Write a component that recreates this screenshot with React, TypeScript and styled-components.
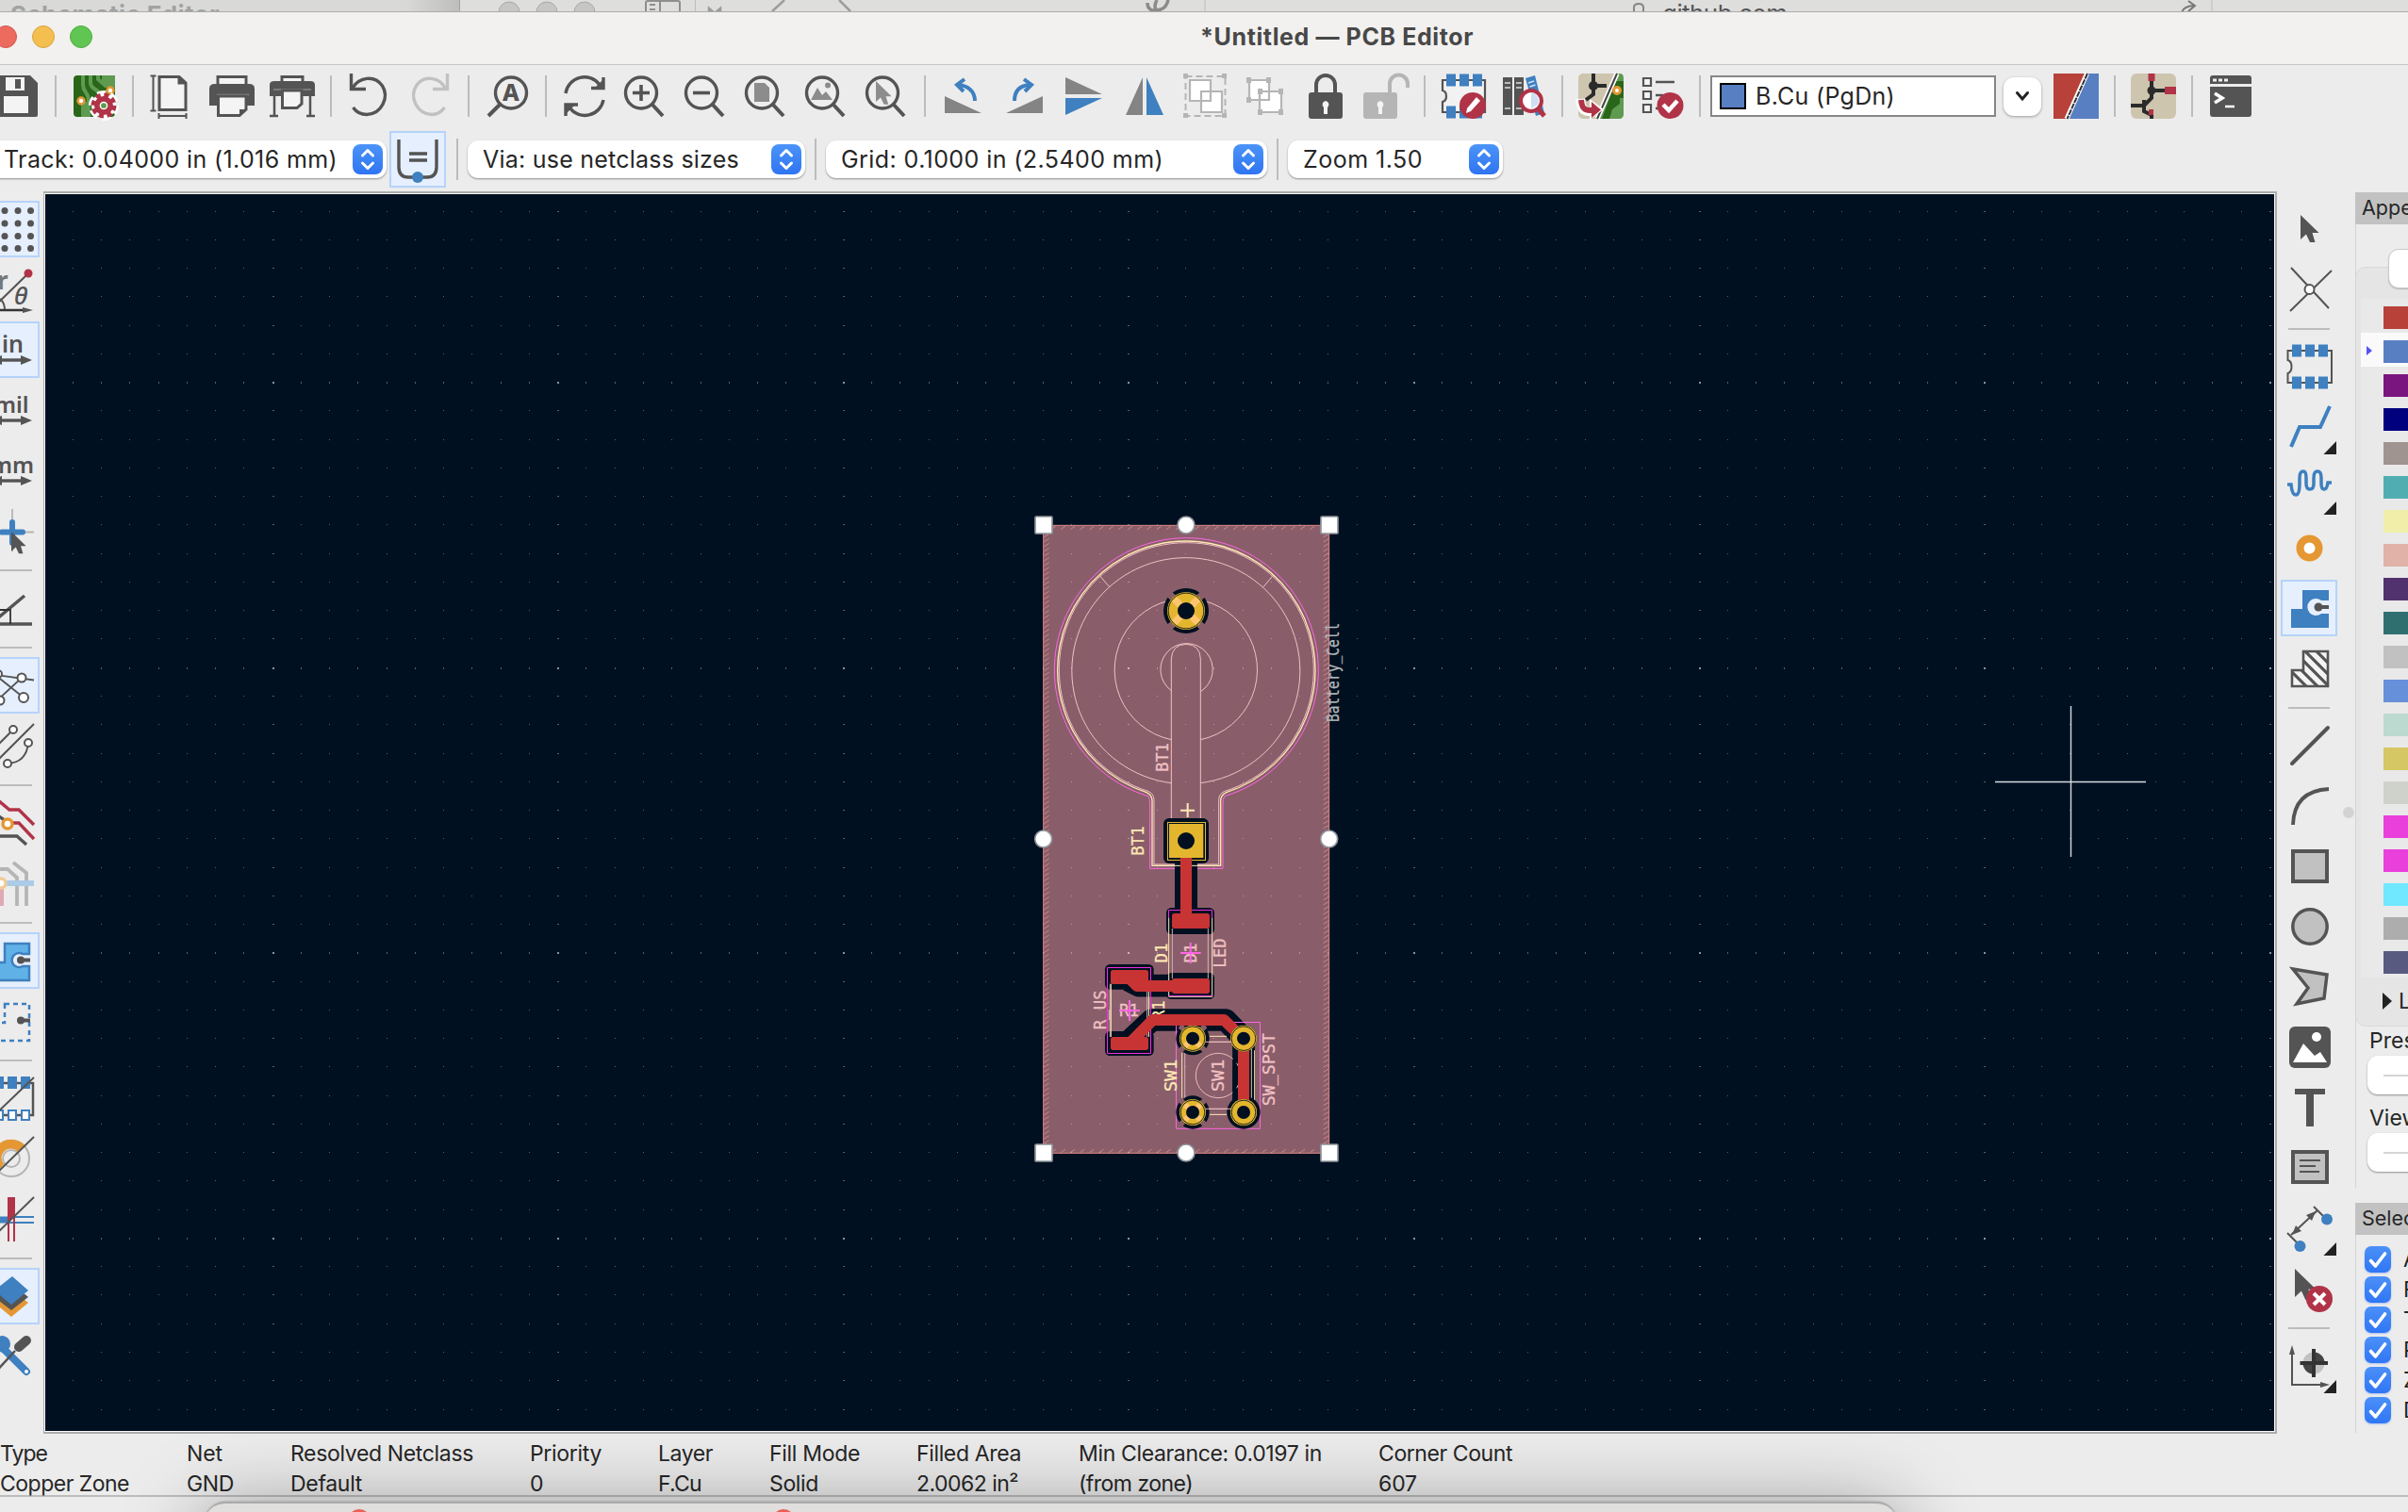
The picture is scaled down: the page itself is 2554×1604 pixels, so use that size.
import React, { useLayoutEffect, useRef, useState } from 'react';
import styled, { createGlobalStyle, css } from 'styled-components';

const K = '#545454';
const B = '#3e80c0';
const R = '#b13347';
const O = '#e59733';
const G = '#b5b5b5';
const VOID = '#001021';
const GOLD = '#e3b62e';
const RED = '#c83434';
const FAB = '#f2c1c4';
const SILK = '#ffe9b5';
const MAG = '#ff66e4';
const PEACH = '#ffc570';
const ZONE = '#895e6a';

const GlobalStyle = createGlobalStyle`
  html, body { margin: 0; padding: 0; overflow: hidden; }
  * { box-sizing: border-box; }
  body { font-family: Inter, "Liberation Sans", sans-serif; color: #262626; }
`;

const Screen = styled.div`
  width: 2554px;
  height: 1604px;
  overflow: hidden;
  display: flex;
  flex-direction: column;
  background: #ececec;
`;

/* ---------- text fitted to a nominal width ---------- */
const Glyphs = styled.span<{ $size: number; $weight: number; $color: string }>`
  display: inline-block;
  white-space: nowrap;
  font-size: ${(p) => p.$size}px;
  font-weight: ${(p) => p.$weight};
  color: ${(p) => p.$color};
  line-height: 32px;
`;

type LabelProps = { text: string; width?: number; size?: number; weight?: number; color?: string };
function Label({ text, width, size = 25, weight = 400, color = '#262626' }: LabelProps) {
  const ref = useRef<HTMLSpanElement>(null);
  const [spacing, setSpacing] = useState(0);
  useLayoutEffect(() => {
    if (ref.current && width) {
      const natural = ref.current.getBoundingClientRect().width;
      setSpacing((width - natural) / text.length);
    }
  }, []);
  return (
    <Glyphs ref={ref} $size={size} $weight={weight} $color={color} style={{ letterSpacing: spacing }}>
      {text}
    </Glyphs>
  );
}

/* ---------- windows behind ---------- */
const BackStrip = styled.div`
  flex: none;
  height: 12px;
  display: flex;
  overflow: hidden;
  background: #dededc;
`;
const BackLeft = styled.div`
  width: 488px;
  height: 12px;
  padding-left: 11px;
  background: linear-gradient(90deg, #d9d9d8 0, #d9d9d8 430px, #bdbdbc 488px);
  border-right: 1px solid #a5a5a5;
  overflow: hidden;
`;
const BackDrawing = styled.svg`
  display: block;
  width: 2066px;
  height: 12px;
`;

/* ---------- title ---------- */
const TitleBar = styled.div`
  flex: none;
  height: 57px;
  display: flex;
  align-items: center;
  padding-bottom: 4px;
  background: #f2f1ef;
  border-top: 1px solid #acacac;
  border-bottom: 1px solid #c6c6c6;
`;
const Lights = styled.div`
  display: flex;
  gap: 16px;
  margin-left: -6px;
  width: 1279px;
`;
const Light = styled.i<{ $c: string; $b: string }>`
  width: 24px;
  height: 24px;
  border-radius: 50%;
  background: ${(p) => p.$c};
  border: 1px solid ${(p) => p.$b};
`;

/* ---------- tool bars ---------- */
const TopTools = styled.div`
  flex: none;
  height: 66px;
  padding-left: 0;
  margin-left: -14px;
  display: flex;
  align-items: center;
`;
const HCell = styled.div`
  flex: none;
  width: 64px;
  height: 60px;
  display: flex;
  align-items: center;
  justify-content: center;
`;
const HSep = styled.div`
  flex: none;
  width: 2px;
  height: 44px;
  margin: 0 8px;
  background: #bcbcbc;
`;
const IconSvg = styled.svg`
  display: block;
  flex: none;
  width: 48px;
  height: 48px;
  overflow: visible;
`;
const LayerBox = styled.div`
  flex: none;
  width: 303px;
  height: 44px;
  margin: 0 8px 0 2px;
  padding-left: 8px;
  display: flex;
  align-items: center;
  gap: 10px;
  background: #fff;
  border: 2px solid #868686;
`;
const LayerSwatch = styled.i`
  width: 28px;
  height: 28px;
  background: #587fc2;
  border: 2px solid #000;
`;
const DropButton = styled.div`
  flex: none;
  width: 40px;
  height: 41px;
  margin-right: 5px;
  display: flex;
  align-items: center;
  justify-content: center;
  background: #fff;
  border-radius: 11px;
  box-shadow: 0 1px 3px rgba(0, 0, 0, 0.35);
`;

const SecondTools = styled.div`
  flex: none;
  height: 68px;
  display: flex;
  align-items: center;
`;
const Select = styled.div<{ $w: number; $ml?: number; $pl: number }>`
  flex: none;
  width: ${(p) => p.$w}px;
  margin-left: ${(p) => p.$ml ?? 0}px;
  height: 40px;
  padding: 0 4px 0 ${(p) => p.$pl}px;
  display: flex;
  align-items: center;
  justify-content: space-between;
  background: #fff;
  border-radius: 11px;
  box-shadow: 0 1px 2px rgba(0, 0, 0, 0.4);
`;
const Stepper = styled.div`
  width: 32px;
  height: 32px;
  border-radius: 8px;
  background: linear-gradient(#4b94f8, #2f74f2);
`;
const SelSep = styled(HSep)<{ $m: string }>`
  margin: ${(p) => p.$m};
`;
const activeLook = css`
  background: #e6effd;
  border: 2px solid #b5d3fa;
`;
const ToggleButton = styled.div`
  flex: none;
  width: 60px;
  height: 60px;
  margin-left: 3px;
  display: flex;
  align-items: center;
  justify-content: center;
  ${activeLook}
`;

/* ---------- body ---------- */
const Body = styled.div`
  flex: none;
  height: 1318px;
  display: flex;
`;
const VTools = styled.div<{ $w: number; $pl: number }>`
  flex: none;
  width: ${(p) => p.$w}px;
  padding-top: 10px;
  display: flex;
  flex-direction: column;
  align-items: flex-start;
`;
const VStack = styled.div<{ $ml: number }>`
  width: 60px;
  margin-left: ${(p) => p.$ml}px;
  display: flex;
  flex-direction: column;
`;
const VCell = styled.div<{ $on?: boolean }>`
  flex: none;
  width: 60px;
  height: 60px;
  margin: 0 0 4px;
  display: flex;
  align-items: center;
  justify-content: center;
  ${(p) => p.$on && activeLook}
`;
const VSep = styled.div`
  flex: none;
  width: 44px;
  height: 2px;
  margin: 7px 8px 9px;
  background: #bcbcbc;
`;
const CanvasFrame = styled.div`
  flex: none;
  width: 2369px;
  height: 1318px;
  padding: 1px 1px 1px 1px;
  background: #f8f8f8;
  border: solid #acacac;
  border-width: 2px 2px 2px 1px;
`;
const Board = styled.svg`
  display: block;
  width: 2364px;
  height: 1312px;
  background: #001021;
`;
const Splitter = styled.div`
  flex: none;
  width: 24px;
  padding-left: 10px;
  display: flex;
  align-items: center;
  justify-content: center;
`;
const Grip = styled.i`
  width: 12px;
  height: 12px;
  border-radius: 50%;
  background: #d3d3d3;
`;

/* ---------- appearance ---------- */
const Side = styled.div`
  flex: none;
  width: 56px;
  padding-top: 1px;
  overflow: hidden;
`;
const PaneTitle = styled.div`
  height: 34px;
  padding-left: 7px;
  background: #c2c2c2;
  overflow: hidden;
`;
const Pane = styled.div<{ $h: number }>`
  height: ${(p) => p.$h}px;
  overflow: hidden;
  border-left: 1px solid #d4d4d4;
`;
const TabButton = styled.div`
  position: relative;
  width: 60px;
  height: 42px;
  margin: 26px 0 0 34px;
  background: #fff;
  border: 1px solid #c9c9c9;
  border-radius: 11px;
  box-shadow: 0 1px 1px rgba(0, 0, 0, 0.2);
`;
const LayerGroup = styled.div`
  height: 806px;
  width: 80px;
  margin: -23px 0 0 -1px;
  padding-top: 33px;
  border: 1px solid #d9d9d9;
  border-radius: 11px;
  background: #e5e5e5;
`;
const LayerRow = styled.div<{ $on?: boolean }>`
  height: 36px;
  margin-left: 5px;
  padding: 8px 0 0 6px;
  display: flex;
  gap: 12px;
  background: ${(p) => (p.$on ? '#fafafa' : '#e9e9e9')};
`;
const Marker = styled.i<{ $on?: boolean }>`
  width: 6px;
  height: 10px;
  margin: 6px 0;
  border: solid transparent;
  border-width: 5px 0 5px 6px;
  border-left-color: ${(p) => (p.$on ? '#5454f4' : 'transparent')};
`;
const Swatch = styled.i<{ $c: string }>`
  width: 50px;
  height: 24px;
  background: ${(p) => p.$c};
`;
const Disclosure = styled.div`
  display: flex;
  align-items: center;
  gap: 7px;
  height: 50px;
  padding-left: 28px;
`;
const Triangle = styled.i`
  border: solid transparent;
  border-width: 9px 0 9px 10px;
  border-left-color: #222;
`;
const FieldName = styled.div<{ $mt: number }>`
  height: 32px;
  margin: ${(p) => p.$mt}px 0 0 14px;
`;
const FieldBox = styled.div`
  width: 80px;
  height: 41px;
  margin-left: 12px;
  padding: 20px 0 0 17px;
  border-radius: 11px;
  background: #fff;
  box-shadow: 0 1px 2px rgba(0, 0, 0, 0.4);
`;
const Dash = styled.div`
  height: 2px;
  background: #d5d5d5;
`;
const CheckRow = styled.div`
  height: 32px;
  padding-left: 9px;
  display: flex;
  align-items: center;
  gap: 13px;
`;
const Check = styled.div`
  flex: none;
  width: 28px;
  height: 28px;
  border-radius: 7px;
  background: linear-gradient(#4b90f8, #3076f5);
  box-shadow: 0 1px 2px rgba(48, 110, 240, 0.35);
`;

/* ---------- status ---------- */
const Status = styled.div`
  flex: none;
  height: 67px;
  padding-top: 5px;
  display: flex;
  border-bottom: 2px solid #bcbcbc;
`;
const StatusCol = styled.div<{ $w: number }>`
  flex: none;
  width: ${(p) => p.$w}px;
  display: flex;
  flex-direction: column;
  align-items: flex-start;
`;
const Below = styled.div`
  flex: none;
  position: relative;
  height: 16px;
  padding: 5px 0 0 217px;
`;
const FrontWindow = styled.div`
  width: 1795px;
  height: 90px;
  padding: 6px 0 0 152px;
  display: flex;
  gap: 426px;
  background: #e0dfde;
  border-top: 2px solid #ababab;
  border-radius: 22px 22px 0 0;
  box-shadow: 0 0 2px rgba(0, 0, 0, 0.3), 0 10px 84px 4px rgba(0, 0, 0, 0.36);
  clip-path: inset(-72px -160px 0 -217px);
`;
const RedDot = styled.i`
  width: 24px;
  height: 24px;
  border-radius: 50%;
  background: #ec5f56;
`;

/* ---------- icons ---------- */
const Svg = ({ children }: { children: React.ReactNode }) => (
  <IconSvg viewBox="0 0 48 48" fill="none">
    {children}
  </IconSvg>
);
const Lens = ({ children }: { children?: React.ReactNode }) => (
  <Svg>
    <circle cx="20" cy="20.5" r="16.5" stroke={K} strokeWidth="3.4" fill="#eee" />
    <path d="M31 32L43 45" stroke={K} strokeWidth="4" />
    {children}
  </Svg>
);
const Gear = ({ x, y }: { x: number; y: number }) => (
  <g transform={`translate(${x} ${y})`}>
    <circle r="13" stroke="#fff" strokeWidth="6" strokeDasharray="8.6 5" fill="#fff" />
    <circle r="11" stroke={R} strokeWidth="5" strokeDasharray="5 3.64" />
    <circle r="7" stroke={R} strokeWidth="6" fill="#5a9a4c" />
    <circle r="3.6" stroke="#fff" strokeWidth="1.5" />
  </g>
);
const Arrowed = ({ y }: { y: number }) => (
  <>
    <path d={`M8 ${y}H38`} stroke={K} strokeWidth="3.4" />
    <path d={`M46 ${y}l-12-5v10zM0 ${y}l14-5v10z`} fill={K} />
  </>
);
const IconText = styled.text<{ $s: number; $w?: number }>`
  font-family: 'Noto Sans', 'Open Sans', sans-serif;
  font-size: ${(p) => p.$s}px;
  font-weight: ${(p) => p.$w ?? 600};
`;
const Pads = ({ y }: { y: number }) => (
  <path d={`M6 ${y}h10v13h-10zM20 ${y}h10v13h-10zM34 ${y}h10v13h-10z`} fill={B} />
);
const Flyout = () => <path d="M53 39v14H39.500z" fill="#222" />;
const Pointer = ({ x, y, s = 1, c = K }: { x: number; y: number; s?: number; c?: string }) => (
  <path transform={`translate(${x} ${y}) scale(${s})`} d="M0 0V26L6 20.500L10 29H15.500L12.500 19H19.500z" fill={c} />
);

const icons: Record<string, React.ReactNode> = {
  save: (
    <Svg>
      <path d="M2 2H38L46 10V44a2 2 0 0 1-2 2H2z" fill={K} />
      <path d="M12 4h20v14H12zM10 24h26v18H10z" fill="#f4f4f4" />
      <path d="M22 6h6v10h-6z" fill={K} />
    </Svg>
  ),
  board: (
    <Svg>
      <rect x="2" y="2" width="44" height="44" rx="4" fill="#2a661a" />
      <path d="M12 2V12c0 8 6 8 6 16v18M20 2v8c0 7 8 6 10 12M28 2v4l8 7h10" stroke="#5e9a50" strokeWidth="4" />
      <path d="M32 2h14v14l-14-6z" fill="#5e9a50" />
      <path d="M14 30v16" stroke="#5e9a50" strokeWidth="8" />
      <circle cx="10" cy="29" r="3.500" fill="#fff" stroke={O} strokeWidth="2.500" />
      <circle cx="41" cy="18" r="3.500" fill="#fff" stroke={O} strokeWidth="2.500" />
      <Gear x={34} y={34} />
    </Svg>
  ),
  page: (
    <Svg>
      <path d="M11 3.500H32L39 10V38.500H11zM32 3v7h7" stroke={K} strokeWidth="3" fill="#f4f4f4" />
      <path d="M31 2l9 9h-9z" fill={K} />
      <path d="M4.500 2V40M1.500 2.500h6M1.500 39.500h6M10 45h30M10.500 42v6M39.500 42v6" stroke={K} strokeWidth="2" />
    </Svg>
  ),
  print: (
    <Svg>
      <path d="M9 3.500H39V13H9z" stroke={K} strokeWidth="3" fill="#f4f4f4" />
      <path d="M0 16q0-5 6-5H42q6 0 6 5V34H0z" fill={K} />
      <path d="M8 22.500h34" stroke="#8a8a8a" strokeWidth="1.500" />
      <path d="M9.500 24H39V38L32 44.500H9.500z" fill="#f4f4f4" stroke={K} strokeWidth="3" />
      <path d="M32 46V38h8z" fill={K} />
    </Svg>
  ),
  plot: (
    <Svg>
      <path d="M13 3.500H35V10H13z" stroke={K} strokeWidth="3" fill="#f4f4f4" />
      <path d="M0 12q0-4 5-4H43q5 0 5 4V24H0z" fill={K} />
      <path d="M4 17h40" stroke="#8a8a8a" strokeWidth="1.500" />
      <path d="M13.500 18H34V32L29 36.500H13.500z" fill="#f4f4f4" stroke={K} strokeWidth="3" />
      <path d="M5 24V46M43 24V46M0 45h9M39 45h9" stroke={K} strokeWidth="2.500" />
    </Svg>
  ),
  undo: (
    <Svg>
      <path d="M6 15C13 4 29 1 37.500 13C45 25 37 43 21 43.500C15 43.500 10 41 6.500 36" stroke={K} strokeWidth="3.400" />
      <path d="M4.500 0V16.500H20" stroke={K} strokeWidth="3.400" />
    </Svg>
  ),
  redo: (
    <Svg>
      <g transform="translate(48 0) scale(-1 1)">
        <path d="M8 15C14 4 31 1 38.500 13C46 25 38 43 22 43.500C16 43.500 12 41 8.500 36" stroke="#c1c1c1" strokeWidth="3.400" />
        <path d="M5.500 0V16.500H21" stroke="#c1c1c1" strokeWidth="3.400" />
      </g>
    </Svg>
  ),
  find: (
    <Svg>
      <circle cx="28" cy="20.500" r="16.500" stroke={K} strokeWidth="3.400" fill="#eee" />
      <path d="M17 32L4 45" stroke={K} strokeWidth="4" />
      <IconText $s={25} $w={800} x="19" y="29" fill={K}>A</IconText>
    </Svg>
  ),
  refresh: (
    <Svg>
      <path d="M4 21A20 20 0 0 1 40 12M44 28A20 20 0 0 1 8 36" stroke={K} strokeWidth="3.400" />
      <path d="M44 4V15.500H31M4 45V33H17" stroke={K} strokeWidth="3.400" />
      <path d="M45 5v12H33zM3 44V32h12z" fill={K} />
    </Svg>
  ),
  zin: <Lens><path d="M11 20.500H29M20 12V29" stroke={K} strokeWidth="3.600" /></Lens>,
  zout: <Lens><path d="M11 20.500H29" stroke={K} strokeWidth="3.600" /></Lens>,
  zfit: <Lens><path d="M12 10h11l5 5v15H12z" fill="#8c8c8c" /></Lens>,
  zobj: <Lens><path d="M8 28l7-13 5 8 4-4 7 9zM26 9.500a3 3 0 1 1 0 6a3 3 0 0 1 0-6" fill="#8c8c8c" /></Lens>,
  zsel: <Lens><Pointer x={13} y={8} s={0.85} c="#8c8c8c" /></Lens>,
  ccw: (
    <Svg>
      <path d="M4 24V42H43z" fill="#848484" />
      <path d="M36 29C36 19 29 12.500 17 12" stroke={B} strokeWidth="4" />
      <path d="M25 6L17 12L24 19" stroke={B} strokeWidth="4" />
    </Svg>
  ),
  cw: (
    <Svg>
      <path d="M44 24V42H5z" fill="#848484" />
      <path d="M14 29C14 19 19 12.500 31 12" stroke={B} strokeWidth="4" />
      <path d="M24 6L32 12L25 19" stroke={B} strokeWidth="4" />
    </Svg>
  ),
  flipv: <Svg><path d="M4 4V22H43z" fill="#848484" /><path d="M4 26H43L4 44z" fill={B} /></Svg>,
  fliph: <Svg><path d="M22 4V44H4z" fill="#848484" /><path d="M26 4V44H44z" fill={B} /></Svg>,
  group: (
    <Svg>
      <rect x="3.500" y="3" width="42" height="42" stroke={G} strokeWidth="2" strokeDasharray="7 4" />
      <path d="M1 0h5v5H1zM42 0h5v5h-5zM1 42h5v5H1zM42 42h5v5h-5z" fill={G} />
      <path d="M8 7H30V29H8zM20 19H42V41H20z" fill="#fff" stroke={G} strokeWidth="2.200" />
    </Svg>
  ),
  ungroup: (
    <Svg>
      <path d="M7 7H28V28H7zM18 19H41V41H18z" fill="#fff" stroke={G} strokeWidth="2.200" />
      <path d="M4 4h5v6H4zM25 4h5v6h-5zM4 25h5v6H4zM16 16h5v6h-5zM38 16h5v6h-5zM16 38h5v6h-5zM38 38h5v6h-5z" fill={G} />
    </Svg>
  ),
  lock: (
    <Svg>
      <path d="M14 22V12a10 10 0 0 1 20 0V22" stroke={K} strokeWidth="4" />
      <rect x="6" y="20" width="36" height="28" rx="3" fill={K} />
      <path d="M24 29a4 4 0 0 1 2 7v7h-4v-7a4 4 0 0 1 2-7z" fill="#f4f4f4" />
    </Svg>
  ),
  unlock: (
    <Svg>
      <path d="M28 22V11a9.500 9.500 0 0 1 19 0V15" stroke={G} strokeWidth="4" />
      <rect x="0" y="20" width="36" height="28" rx="3" fill={G} />
      <path d="M18 29a4 4 0 0 1 2 7v7h-4v-7a4 4 0 0 1 2-7z" fill="#f4f4f4" />
    </Svg>
  ),
  fped: (
    <Svg>
      <path d="M2 7H47V41H2V30q4-1 4-6t-4-6z" stroke={K} strokeWidth="2.200" fill="#f2f2f2" />
      <Pads y={0.500} /><Pads y={34.500} />
      <circle cx="34" cy="34" r="14" fill={R} />
      <path d="M27 42l1-5 10-12 4 4-10 11z" fill="#fff" />
    </Svg>
  ),
  lib: (
    <Svg>
      <path d="M2 4h10v40H2zM14 4h10v40H14z" fill={K} />
      <path d="M4 10h6M4 15h6M4 37h6M16 10h6M16 15h6M16 37h6" stroke="#ddd" strokeWidth="1.700" />
      <path d="M26 5l10-3 10 40-9 3z" fill={B} />
      <path d="M29 10l6-2M30.500 14l6-2" stroke="#cfe0f2" strokeWidth="1.700" />
      <circle cx="32" cy="29" r="11" stroke={R} strokeWidth="4" fill="#fff" />
      <path d="M32 20a9 9 0 0 1 7 13l-7 4z" fill="#cfe0f2" />
      <path d="M39 37L46 45" stroke={R} strokeWidth="5" />
    </Svg>
  ),
  sync: (
    <Svg>
      <rect width="48" height="48" rx="5" fill="#cec5af" />
      <path d="M40 0h4q4 0 4 5V43q0 5-5 5H18z" fill="#5e9a50" />
      <path d="M40 8h8v18h-4v6l-8 6-3 10h-8z" fill="#2a661a" />
      <path d="M41 0L20 48" stroke="#fff" strokeWidth="5.500" /><path d="M41 0L20 48" stroke="#444" strokeWidth="2" />
      <path d="M16 0V22l-8 6M16 13h14" stroke="#2b2b2b" strokeWidth="4" /><circle cx="16" cy="13" r="5" fill="#2b2b2b" />
      <circle cx="41" cy="18" r="3.500" fill="#fff" stroke={O} strokeWidth="3" />
      <path d="M2 27C3 40 8 41 16 40" stroke="#fff" strokeWidth="10" /><path d="M12 27L27 38L12 49z" fill="#fff" />
      <path d="M3 28C4 39 8 39 16 39" stroke={R} strokeWidth="6" /><path d="M14 30L24 38.500L14 47z" fill={R} />
    </Svg>
  ),
  drc: (
    <Svg>
      <path d="M5 5h8v8H5zM5 19h8v8H5zM5 33h8v8H5z" stroke={K} strokeWidth="2.200" fill="#f4f4f4" />
      <path d="M18 9H38M18 23H26M18 37H22" stroke={K} strokeWidth="2.500" />
      <circle cx="33.500" cy="34" r="14" fill={R} />
      <path d="M26 33l6 6 9-10" stroke="#fff" strokeWidth="4.500" />
    </Svg>
  ),
  pair: (
    <Svg>
      <path d="M0 0H34L13 48H0z" fill="#b8413a" /><path d="M37 0H48V48H15z" fill="#587fc2" />
      <path d="M35.500 0L14 48" stroke="#fff" strokeWidth="5" />
      <path d="M36 0L14.500 48" stroke="#333" strokeWidth="2" strokeDasharray="6 1" />
    </Svg>
  ),
  sch: (
    <Svg>
      <rect width="48" height="48" rx="6" fill="#cec5af" />
      <path d="M22 6V26L14 34M22 18H38M0 34H14M14 28V40L22 44V48" stroke="#2b2b2b" strokeWidth="4" />
      <circle cx="22" cy="18" r="4.500" fill="#2b2b2b" />
      <path d="M18.500 0h7v8h-7zM36 14h12v8H36zM19 38h5v6h-5z" fill={R} />
    </Svg>
  ),
  term: (
    <Svg>
      <path d="M2 11V5q0-3 3-3H43q3 0 3 3V11zM2 14H46V43q0 3-3 3H5q-3 0-3-3z" fill={K} />
      <path d="M5 7h4M11 7h4M17 7h4" stroke="#eee" strokeWidth="3" />
      <path d="M7 21l8 5-8 5" stroke="#fff" strokeWidth="3.500" /><path d="M18 35H28" stroke="#fff" strokeWidth="2.500" />
    </Svg>
  ),
  track: (
    <Svg>
      <path d="M4 3V32Q4 43 14 43H34Q44 43 44 32V3M15 18H34M15 25H34" stroke={K} strokeWidth="3.400" />
      <circle cx="24" cy="43" r="6" fill={B} />
    </Svg>
  ),
  grid: (
    <Svg>
      {[4.5, 18, 31.5, 44.500].map((y) => [3, 17, 31, 44.500].map((x) => <circle key={x + '-' + y} cx={x} cy={y} r="3.500" fill={K} />))}
    </Svg>
  ),
  polar: (
    <Svg>
      <path d="M2 46L42 7M17 46Q17 38 12 34" stroke={K} strokeWidth="2" />
      <path d="M0 46H38" stroke="#333" strokeWidth="2.500" /><path d="M47 46l-11-3v6z" fill={K} />
      <circle cx="42" cy="7" r="4.500" fill={R} />
      <IconText $s={26} $w={700} x="9" y="24" fill="#777">r</IconText>
      <IconText $s={26} $w={500} x="27" y="40" fill={K} fontStyle="italic">θ</IconText>
    </Svg>
  ),
  in: <Svg><IconText $s={25} x="14" y="27" fill={K}>in</IconText><Arrowed y={35} /></Svg>,
  mil: <Svg><IconText $s={24} x="6" y="27" fill={K}>mil</IconText><Arrowed y={35} /></Svg>,
  mm: <Svg><IconText $s={24} x="2" y="27" fill={K}>mm</IconText><Arrowed y={35} /></Svg>,
  cross: (
    <Svg>
      <path d="M25 1V46M2 25.500H48" stroke={G} strokeWidth="1.800" />
      <path d="M25 15V37M14 25.500H36" stroke={B} strokeWidth="6" strokeLinecap="round" />
      <Pointer x={24} y={25} s={0.800} />
    </Svg>
  ),
  angle: (
    <Svg>
      <path d="M0 41H46" stroke={K} strokeWidth="3.400" /><path d="M2 41L38 11" stroke={K} strokeWidth="3.400" />
      <path d="M8 26H23V41" stroke="#333" strokeWidth="1.800" />
    </Svg>
  ),
  rats: (
    <Svg>
      <path d="M0 12L48 18.500M2 9L37 37M35 16L10 39" stroke={K} strokeWidth="1.800" />
      <g fill="#fff" stroke={K} strokeWidth="2"><circle cx="35" cy="16" r="4.500" /><circle cx="37" cy="37" r="5" /><circle cx="12" cy="40" r="4.500" /><circle cx="10" cy="12" r="4" /></g>
    </Svg>
  ),
  curved: (
    <Svg>
      <path d="M2 47L48 1M26 7L4 29M20 43Q40 42 42 21" stroke={K} strokeWidth="2" />
      <g fill="#fff" stroke={K} strokeWidth="2"><circle cx="26" cy="7" r="4" /><circle cx="42" cy="21" r="4" /><circle cx="20" cy="43" r="4" /></g>
    </Svg>
  ),
  netc: (
    <Svg>
      <path d="M2 0h8L22 10H32L48 26M22 24H32L48 41" stroke={R} strokeWidth="3.400" />
      <path d="M4 12L18 22M0 38H30L40 47" stroke={K} strokeWidth="3.400" />
      <circle cx="20" cy="25" r="5" stroke={O} strokeWidth="3.500" fill="#fff" />
    </Svg>
  ),
  ghost: (
    <Svg>
      <path d="M6 9H20L30 18V48M26 2L40 13V48" stroke={G} strokeWidth="3.800" />
      <path d="M16 24H48" stroke="#abcbe6" strokeWidth="6" /><path d="M13 26V48" stroke="#e0a9b3" strokeWidth="6" />
      <circle cx="13" cy="24" r="5" stroke="#f0cb98" strokeWidth="3.500" fill="#fff" />
    </Svg>
  ),
  zfill: (
    <Svg>
      <path d="M43 17V6H17V26H3V45H43V30H36a7.500 7.500 0 1 1 0-13z" fill="#5fb1e6" stroke={B} strokeWidth="2.500" />
      <circle cx="34" cy="23.500" r="4" fill={K} /><path d="M34 23.500H44" stroke={K} strokeWidth="4" />
    </Svg>
  ),
  zout2: (
    <Svg>
      <path d="M17 6H43V45H3V26H17z" stroke={B} strokeWidth="2.500" strokeDasharray="5 4" />
      <circle cx="34" cy="23.500" r="4" fill={K} /><path d="M34 23.500H44" stroke={K} strokeWidth="4" />
    </Svg>
  ),
  padsk: (
    <Svg>
      <path d="M0 8H47V42H0" stroke={K} strokeWidth="2.500" />
      <path d="M6 1h10v13H6zM20 1h10v13H20zM34 1h10v13H34z" fill={B} />
      <path d="M7 37h8v10H7zM21 37h8v10H21zM35 37h8v10H35z" fill="#fff" stroke={B} strokeWidth="2" />
      <path d="M2 46L48 2" stroke={K} strokeWidth="2" />
    </Svg>
  ),
  viask: (
    <Svg>
      <circle cx="24" cy="24" r="19" stroke={G} strokeWidth="2" /><circle cx="24" cy="24" r="9" stroke={G} strokeWidth="2" />
      <path d="M10 37A19.500 19.500 0 0 1 38 9.500L31 17A9.500 9.500 0 0 0 16 30z" fill={O} />
      <path d="M4 44L48 1" stroke={K} strokeWidth="2" />
    </Svg>
  ),
  trsk: (
    <Svg>
      <path d="M0 25H20" stroke={B} strokeWidth="7" /><path d="M20 22H48M20 28H48" stroke={B} strokeWidth="2" />
      <path d="M20 1h8V20L20 29z" fill={R} /><path d="M21 20V48M27 20V48" stroke={R} strokeWidth="2" />
      <path d="M2 46L48 1" stroke={K} strokeWidth="2" />
    </Svg>
  ),
  layers: (
    <Svg>
      <path d="M24 17L42 31 24 46 6 31z" fill={O} /><path d="M24 10L42 25 24 39 6 25z" fill={K} />
      <path d="M25 3L42 18 24 33 6 18z" fill={B} />
    </Svg>
  ),
  tools: (
    <Svg>
      <path d="M14 14L40 40" stroke={B} strokeWidth="8" strokeLinecap="round" />
      <path d="M14 2a9 9 0 0 1 8 13l-8 5L4 14V4z" fill={B} />
      <circle cx="40" cy="40" r="2" fill="#fff" />
      <path d="M4 44L28 18" stroke={K} strokeWidth="2.500" /><path d="M32 14L40 7" stroke={K} strokeWidth="10" strokeLinecap="round" />
    </Svg>
  ),
  pointer: <Svg><Pointer x={15} y={9} /></Svg>,
  cleanx: (
    <Svg>
      <path d="M5 1L45 44M4 47L48 4" stroke={K} strokeWidth="2" />
      <circle cx="24.500" cy="24" r="5" fill="#fff" stroke={K} strokeWidth="2" />
    </Svg>
  ),
  fp: (
    <Svg>
      <path d="M1.500 7H48V41H1.500V31q4-1 4-7t-4-7z" stroke={K} strokeWidth="2" />
      <Pads y={0.500} /><Pads y={34.500} />
    </Svg>
  ),
  route: <Svg><path d="M5 45L14 24H36L46 2" stroke={B} strokeWidth="4" /><Flyout /></Svg>,
  tune: (
    <Svg>
      <path d="M1 21H5Q6 32 10 32Q14 32 14 20V14Q14 7 18 7Q21 7 21 14V20Q21 26 25 26Q29 26 29 20V14Q29 7 33 7Q37 7 37 14V20Q37 26 40 26Q43 26 44 19H48" stroke={B} strokeWidth="3.500" />
      <Flyout />
    </Svg>
  ),
  via: <Svg><circle cx="24.500" cy="24.500" r="10" stroke={O} strokeWidth="8" fill="#fff" /></Svg>,
  zone: (
    <Svg>
      <path d="M17 5H45V45H5V25H17z" fill={B} />
      <path d="M37 16a9 9 0 1 0 0 14H46V16z" fill="#e6effd" />
      <circle cx="34" cy="23" r="4.500" fill={K} /><path d="M34 23H45" stroke={K} strokeWidth="4" />
    </Svg>
  ),
  rule: (
    <Svg>
      <clipPath id="ruleClip"><path d="M18 5H45V43H6V25H18z" /></clipPath>
      <path d="M18 6H44V43H6V26H18z" fill="#f4f4f4" />
      <path clipPath="url(#ruleClip)" d="M0 22L26 48M4 14L38 48M6 4L50 48M16 2L50 36M28 2L50 24M40 2L50 12" stroke={K} strokeWidth="3.200" />
      <path d="M18 6H44V43H6V26H18z" stroke={K} strokeWidth="2.600" />
    </Svg>
  ),
  line: <Svg><path d="M6 43L44 5" stroke={K} strokeWidth="4" strokeLinecap="round" /></Svg>,
  arc: <Svg><path d="M7 44Q8 8 45 6" stroke={K} strokeWidth="3.800" /></Svg>,
  rect: <Svg><rect x="7" y="8" width="36" height="32" fill="#c1c1c1" stroke={K} strokeWidth="4" /></Svg>,
  circle: <Svg><circle cx="25" cy="24" r="18.200" fill="#c1c1c1" stroke={K} strokeWidth="3.500" /></Svg>,
  poly: <Svg><path d="M7 5L43 11L40 36L11 42L23 25z" fill="#c1c1c1" stroke={K} strokeWidth="3.500" /></Svg>,
  image: (
    <Svg>
      <rect x="3" y="2" width="44" height="44" rx="6" fill={K} />
      <circle cx="32" cy="13" r="5" fill="#fff" /><path d="M7 40L18 20L30 33L36 29L43 40z" fill="#fff" />
    </Svg>
  ),
  text: <Svg><path d="M9 4H41V10H29V44H21V10H9z" fill={K} /></Svg>,
  tbox: (
    <Svg>
      <rect x="7" y="7" width="36" height="32" fill="#c1c1c1" stroke={K} strokeWidth="4" />
      <path d="M14 16H36M14 22H31M14 28H35" stroke={K} strokeWidth="2.200" />
    </Svg>
  ),
  dim: (
    <Svg>
      <path d="M1 29L14 42M29 1L43 15M5 31L33 5" stroke={K} strokeWidth="2" />
      <path d="M6 31l4-10 6 6zM31 6l-10 4 6 6z" fill={K} />
      <circle cx="43" cy="14.500" r="6" fill={B} /><circle cx="14.500" cy="43" r="6" fill={B} />
      <Flyout />
    </Svg>
  ),
  del: (
    <Svg>
      <Pointer x={9} y={3} s={1.15} />
      <circle cx="35" cy="35" r="14" fill={R} /><path d="M29 29L41 41M41 29L29 41" stroke="#fff" strokeWidth="4" />
    </Svg>
  ),
  origin: (
    <Svg>
      <path d="M6 6V44H42" stroke={K} strokeWidth="2" /><path d="M6 2l3 10H3zM46 44l-10-3v6z" fill={K} />
      <circle cx="29" cy="21" r="11.500" fill="#c1c1c1" /><path d="M29 21V9.500A11.500 11.500 0 0 1 40.500 21zM29 21V32.500A11.500 11.500 0 0 1 17.500 21z" fill="#444" />
      <path d="M29 6V36M14.500 21H44" stroke="#333" strokeWidth="4" />
      <Flyout />
    </Svg>
  ),
};

const topIcons = 'save | board | page print plot | undo redo | find | refresh zin zout zfit zobj zsel | ccw cw flipv fliph group ungroup lock unlock | fped lib | sync drc | LAYER pair | sch | term'.split(' ');
const leftIcons = 'grid! polar in! mil mm cross | angle | rats! curved | netc ghost | zfill! zout2 | padsk viask trsk | layers! tools'.split(' ');
const rightIcons = 'pointer cleanx | fp route tune via zone! rule | line arc rect circle poly image text tbox dim del | origin'.split(' ');
const layerColors = ['#b8413a', '#587fc2', '#7a147e', '#00007f', '#9f9490', '#50aeb1', '#f1eeaa', '#e0b2a8', '#51326f', '#2f6f6f', '#c1c1c1', '#6690d9', '#bcdad0', '#d5c763', '#cfd1cb', '#e93fdb', '#e93fdb', '#70e8ff', '#adadad', '#585a80'];
const filters = ['All items', 'Footprints', 'Tracks', 'Pads', 'Zones', 'Dimensions'];
const status: [number, string, number, string, number][] = [
  [198, 'Type', 50, 'Copper Zone', 137],
  [110, 'Net', 38, 'GND', 50],
  [254, 'Resolved Netclass', 194, 'Default', 76],
  [136, 'Priority', 76, '0', 15],
  [118, 'Layer', 58, 'F.Cu', 46],
  [156, 'Fill Mode', 96, 'Solid', 52],
  [172, 'Filled Area', 111, '2.0062 in²', 108],
  [318, 'Min Clearance: 0.0197 in', 258, '(from zone)', 121],
  [200, 'Corner Count', 142, '607', 41],
];

const Column = ({ names }: { names: string[] }) => (
  <>
    {names.map((n, i) =>
      n === '|' ? <VSep key={i} /> : <VCell key={i} $on={n.endsWith('!')}>{icons[n.replace('!', '')]}</VCell>
    )}
  </>
);

const Chevrons = () => (
  <Stepper>
    <svg width="32" height="32" fill="none" stroke="#fff" strokeWidth="3" strokeLinecap="round" strokeLinejoin="round">
      <path d="M10.500 12L16 6.500L21.500 12M10.500 20L16 25.500L21.500 20" />
    </svg>
  </Stepper>
);

/* ---------- board drawing ---------- */
function gridPath() {
  const minor: string[] = [];
  const major: string[] = [];
  for (let i = -8; i < 72; i++) {
    const x = Math.round(288.6 + i * 30.262);
    if (x < 48 || x > 2411) continue;
    for (let j = -6; j < 38; j++) {
      const y = Math.round(405.1 + j * 30.262);
      if (y < 206 || y > 1517) continue;
      const w = i % 10 === 0 ? 2 : 1;
      const h = j % 10 === 0 ? 2 : 1;
      (w + h === 4 ? major : minor).push(`M${x} ${y}h${w}v${h}h-${w}z`);
    }
  }
  return [minor.join(''), major.join('')];
}
const [minorDots, majorDots] = gridPath();

const BoardText = styled.text<{ $c: string }>`
  font-family: 'DejaVu Sans Mono', monospace;
  font-size: 55px;
  fill: ${(p) => p.$c};
  stroke: ${(p) => p.$c};
  stroke-width: 0.8px;
`;
const VText = ({ x, y, len, c, t }: { x: number; y: number; len: number; c: string; t: string }) => (
  <BoardText $c={c} transform={`translate(${x + 20} ${y + len / 2}) rotate(-90)`} textLength={len} lengthAdjust="spacingAndGlyphs">
    {t}
  </BoardText>
);
const Spokes = ({ r1, r2, w, c, dirs = [45, 135, 225, 315] }: { r1: number; r2: number; w: number; c: string; dirs?: number[] }) => (
  <>
    {dirs.map((a) => (
      <path key={a} transform={`rotate(${a})`} d={`M${r1} 0H${r2}`} stroke={c} strokeWidth={w} />
    ))}
  </>
);
const Pad = ({ x, y, r, hole, gap, spoke, dirs }: { x: number; y: number; r: number; hole: number; gap: number; spoke?: number; dirs?: number[] }) => (
  <g transform={`translate(${x} ${y})`}>
    <circle r={gap} fill={VOID} />
    {spoke && <Spokes r1={r} r2={gap + 4} w={spoke} c={ZONE} />}
    <circle r={r} fill={GOLD} />
    {spoke && <Spokes r1={hole - 1} r2={r - 7} w={spoke} c={PEACH} dirs={dirs} />}
    <circle r={r - 3.5} fill="none" stroke={VOID} strokeWidth="2.500" />
    <circle r={hole} fill={VOID} />
  </g>
);

function hatch() {
  const s: string[] = [];
  for (let y = 104; y < 2078; y += 15.2) s.push(`M82 ${y}L98 ${y - 10}M971 ${y}L988 ${y - 10}`);
  for (let x = 105; x < 975; x += 30.500) s.push(`M${x} 95L${x + 14} 85M${x} 2078L${x + 14} 2068`);
  return s.join('');
}

const outline = (r: number, nx: number, ny: number) => {
  const cx = 535;
  const dx = nx + (r > 415 ? 5 : 18);
  const dy = Math.sqrt(r * r - dx * dx);
  return `M${cx - dx} ${542 + dy}A${r} ${r} 0 1 1 ${cx + dx} ${542 + dy}Q${cx + nx} ${550 + dy} ${cx + nx} ${570 + dy}V${ny}H${cx - nx}V${570 + dy}Q${cx - nx} ${550 + dy} ${cx - dx} ${542 + dy}z`;
};

const Pcb = () => (
  <Board viewBox="48 206 2364 1312">
    <g transform="translate(1080 530) scale(0.333333)" fill="none">
      <rect x="80" y="82" width="909" height="1998" fill={ZONE} stroke="#dd8a87" strokeWidth="3" />
      <path d={hatch()} stroke="#d98884" strokeWidth="2.800" />
    </g>
    <path d={minorDots} fill="#fff" opacity="0.340" />
    <path d={majorDots} fill="#fff" opacity="0.550" />
    <g transform="translate(1080 530) scale(0.333333)" fill="none">
      <g stroke={FAB} strokeWidth="3">
        <path d="M487 902A363 360 0 1 1 580 902M487 764A227 227 0 1 1 580 764M487 608A83 83 0 1 1 580 611" />
        <path d="M487 1032V507Q489 462 534 460Q579 462 580 507V1032" />
        <path d="M260 243L290 278M812 240L780 278" />
        <path d={outline(405, 103, 1161)} />
      </g>
      <path d={outline(410, 109, 1165)} stroke={SILK} strokeWidth="4" />
      <path d={outline(420, 116, 1174)} stroke={MAG} strokeWidth="3" />
      <VText x={456} y={820} len={92} c={FAB} t="BT1" />
      <VText x={380} y={1086} len={94} c={SILK} t="BT1" />
      <VText x={1001} y={550} len={316} c="#b3b7ba" t="Battery_Cell" />
      <path d="M516 989H561M539 966V1011" stroke={SILK} strokeWidth="6" />
      <Pad x={534} y={354} r={60} hole={27} gap={72} spoke={22} />
      <rect x="462" y="1014" width="144" height="144" rx="18" fill={VOID} />
      <rect x="498" y="1150" width="72" height="160" fill={VOID} />
      <rect x="475.500" y="1027.500" width="120" height="120" stroke={GOLD} strokeWidth="3" />
      <rect x="480" y="1032" width="109" height="108" fill={GOLD} />
      <circle cx="534" cy="1086" r="27" fill={VOID} />
      <path d="M427 1165H516M552 1165H644" stroke={SILK} strokeWidth="3" />
    </g>
    <g transform="translate(1080 880) scale(0.333333)" fill="none">
      <g stroke={VOID} strokeWidth="71" strokeLinejoin="round">
        <path d="M350 480L384 497H548" />
        <path d="M340 685L425 606H660L717 665V900" />
      </g>
      <g fill={VOID}>
        <rect x="471" y="249" width="153" height="84" rx="16" />
        <rect x="471" y="456" width="153" height="84" rx="16" />
        <rect x="276" y="429" width="155" height="80" rx="16" />
        <rect x="276" y="642" width="155" height="78" rx="16" />
      </g>
      <VText x={445} y={575} len={62} c={SILK} t="R1" />
      <path d="M479 280V532H617V280M295 491V660M415.500 515V660M521 703V862M751 703V862M609 658H663M609 907H663" stroke={SILK} strokeWidth="3" />
      <path d="M490 315V475M604 315V475M292 491V660M410 515V660M530 676H742V889H530z" stroke="#d9b9bb" strokeWidth="2.800" />
      <circle cx="636" cy="783" r="71" stroke={FAB} strokeWidth="2.800" />
      <path d="M478.500 280V256.500H616.500V280M478.500 529H616.500M283.500 439.500H421.500V712.500H283.500z" stroke="#f22fe0" strokeWidth="3" />
      <path d="M502.500 613.500H769.500V952H502.500z" stroke={MAG} strokeWidth="3" />
      <path d="M684 680H752V880H682V800Q684 700 684 680z" fill={VOID} />
      <path d="M742 676V889M751.500 703V862" stroke="#e8d5a4" strokeWidth="2.800" />
      <path d="M695 743A71 71 0 0 1 695 823" stroke={FAB} strokeWidth="2.800" />
      <Pad x={555} y={665} r={42} hole={21} gap={53} spoke={17} dirs={[45, 135]} />
      <Pad x={555} y={900} r={42} hole={21} gap={53} spoke={17} />
      <Pad x={717} y={900} r={42} hole={21} gap={53} />
      <g stroke={RED} strokeWidth="36" strokeLinejoin="round">
        <path d="M534 90V290M354 474L378 498H548M354 681L428 606H655L715 665M717 665V880" />
      </g>
      <g fill={RED}>
        <rect x="489" y="267" width="120" height="48" rx="8" />
        <rect x="489" y="474" width="120" height="48" rx="8" />
        <rect x="294" y="447" width="120" height="45" rx="8" />
        <rect x="294" y="660" width="120" height="42" rx="8" />
      </g>
      {[665, 900].map((y) => <Pad key={y} x={717} y={y} r={42} hole={21} gap={42} />)}
      <path d="M595 676H678M595 889H678" stroke={FAB} strokeWidth="2.800" />
      <VText x={640} y={393} len={94} c={FAB} t="LED" />
      <VText x={454} y={393} len={63} c={SILK} t="D1" />
      <VText x={546} y={393} len={63} c={FAB} t="D1" />
      <VText x={259} y={574} len={126} c={FAB} t="R_US" />
      <VText x={485} y={783} len={104} c={SILK} t="SW1" />
      <VText x={634} y={783} len={104} c={FAB} t="SW1" />
      <VText x={795} y={764} len={232} c={FAB} t="SW_SPST" />
      <BoardText $c={FAB} x="321" y="594" textLength="63" lengthAdjust="spacingAndGlyphs">R1</BoardText>
      <path d="M516 393H581M548 360V426M321 576H387M354 543V609" stroke={MAG} strokeWidth="6" />
    </g>
    <g transform="translate(1080 530) scale(0.333333)" fill="#fff" stroke="#8f959c" strokeWidth="5">
      {[81, 2079].map((y) => (
        <g key={y}>
          <rect x="54" y={y - 27} width="54" height="54" rx="3" />
          <rect x="963" y={y - 27} width="54" height="54" rx="3" />
          <circle cx="534" cy={y} r="27" />
        </g>
      ))}
      <circle cx="80" cy="1080" r="27" /><circle cx="989" cy="1080" r="27" />
    </g>
    <path d="M2116 829.500H2276M2196.500 749V909" stroke="#d8dbde" strokeWidth="1.400" />
  </Board>
);

export default function App() {
  return (
    <Screen>
      <GlobalStyle />
      <BackStrip>
        <BackLeft><Label text="Schematic Editor" width={222} size={26} weight={700} color="#a2a2a1" /></BackLeft>
        <BackDrawing viewBox="488 0 2066 12" fill="none">
          <g fill="#c6c6c5" stroke="#a8a8a7"><circle cx="540" cy="13" r="11" /><circle cx="580" cy="13" r="11" /><circle cx="620" cy="13" r="11" /></g>
          <path d="M685 14V3q0-2 2-2H719q2 0 2 2V14M700 1V12M689 5h6M689 10h6" stroke="#8f8f8e" strokeWidth="2" />
          <path d="M737.500 0V12M1278 0V12M2346 0V12" stroke="#bdbdbb" />
          <path d="M752 14V9l6 5 6-5v5M819 12L832 0M890 0l12 12" stroke="#9c9c9b" strokeWidth="2.500" />
          <path d="M1217 3q0 9 10 8q10-1 12-11M1227 11q-4-3 0-11" stroke="#8b8b8a" strokeWidth="3.500" />
          <path d="M1733 12V8q0-4 5-4t5 4v4" stroke="#868685" strokeWidth="2" />
          <path d="M2314 14q1-7 12-8M2321 1l7 5-7 6" stroke="#777" strokeWidth="2" />
          <text x="1763" y="24" fontSize="26" textLength="133" fill="#555">github.com</text>
        </BackDrawing>
      </BackStrip>
      <TitleBar>
        <Lights>
          <Light $c="#ec6a5e" $b="#d7554a" /><Light $c="#f4bf4f" $b="#d9a440" /><Light $c="#61c554" $b="#4fae42" />
        </Lights>
        <Label text="*Untitled — PCB Editor" width={290} size={25} weight={700} color="#484848" />
      </TitleBar>
      <TopTools>
        {topIcons.map((n, i) =>
          n === '|' ? <HSep key={i} /> : n === 'LAYER' ? (
            <React.Fragment key={i}>
              <LayerBox><LayerSwatch /><Label text="B.Cu (PgDn)" width={148} /></LayerBox>
              <DropButton>
                <svg width="16" height="12" fill="none"><path d="M2.500 2.500L8 9L13.500 2.500" stroke="#222" strokeWidth="3" strokeLinecap="round" /></svg>
              </DropButton>
            </React.Fragment>
          ) : <HCell key={i}>{icons[n]}</HCell>
        )}
      </TopTools>
      <SecondTools>
        <Select $w={430} $ml={-20} $pl={24}><Label text="Track: 0.04000 in (1.016 mm)" width={354} /><Chevrons /></Select>
        <ToggleButton>{icons.track}</ToggleButton>
        <SelSep $m="0 10px 0 11px" />
        <Select $w={358} $pl={16}><Label text="Via: use netclass sizes" width={272} /><Chevrons /></Select>
        <SelSep $m="0 10px" />
        <Select $w={468} $pl={16}><Label text="Grid: 0.1000 in (2.5400 mm)" width={342} /><Chevrons /></Select>
        <SelSep $m="0 10px" />
        <Select $w={228} $pl={16}><Label text="Zoom 1.50" width={127} /><Chevrons /></Select>
      </SecondTools>
      <Body>
        <VTools $w={46} $pl={0}><VStack $ml={-18}><Column names={leftIcons} /></VStack></VTools>
        <CanvasFrame><Pcb /></CanvasFrame>
        <VTools $w={59} $pl={4}><VStack $ml={4}><Column names={rightIcons} /></VStack></VTools>
        <Splitter><Grip /></Splitter>
        <Side>
          <PaneTitle><Label text="Appearance" size={21.5} /></PaneTitle>
          <Pane $h={1022}>
            <TabButton />
            <LayerGroup>
              {layerColors.map((c, i) => (
                <LayerRow key={i} $on={i === 1}><Marker $on={i === 1} /><Swatch $c={c} /></LayerRow>
              ))}
              <Disclosure><Triangle /><Label text="Layer Display Options" size={23} /></Disclosure>
            </LayerGroup>
            <FieldName $mt={-1}><Label text="Presets" size={23} /></FieldName>
            <FieldBox><Dash /></FieldBox>
            <FieldName $mt={9}><Label text="Viewports" size={23} /></FieldName>
            <FieldBox><Dash /></FieldBox>
          </Pane>
          <PaneTitle style={{ marginTop: 16 }}><Label text="Selection Filter" size={21.5} /></PaneTitle>
          <Pane $h={210} style={{ paddingTop: 10 }}>
            {filters.map((f) => (
              <CheckRow key={f}>
                <Check>
                  <svg width="28" height="28" fill="none"><path d="M6.500 15.500L11.500 21L21.500 8" stroke="#fff" strokeWidth="3.600" strokeLinecap="round" strokeLinejoin="round" /></svg>
                </Check>
                <Label text={f} size={23} />
              </CheckRow>
            ))}
          </Pane>
        </Side>
      </Body>
      <Status>
        {status.map(([w, a, aw, b, bw]) => (
          <StatusCol key={a} $w={w}>
            <Label text={a} width={aw} size={23} /><Label text={b} width={bw} size={23} />
          </StatusCol>
        ))}
      </Status>
      <Below>
        <FrontWindow><RedDot /><RedDot /></FrontWindow>
      </Below>
    </Screen>
  );
}
